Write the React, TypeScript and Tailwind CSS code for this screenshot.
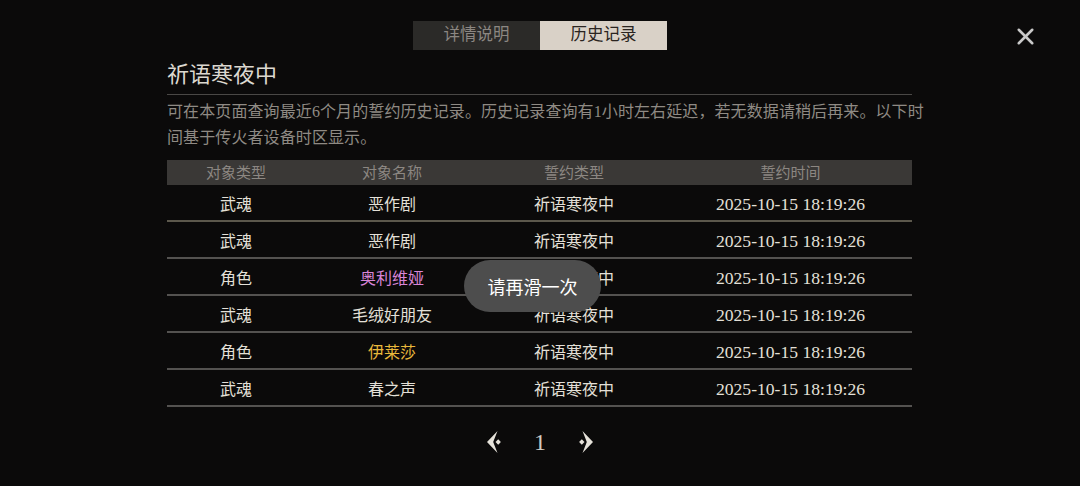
import { X } from 'lucide-react'

type Row = {
  kind: string
  name: string
  tone?: 'purple' | 'gold'
  vow: string
  time: string
}

const ROWS: Row[] = [
  { kind: '武魂', name: '恶作剧', vow: '祈语寒夜中', time: '2025-10-15 18:19:26' },
  { kind: '武魂', name: '恶作剧', vow: '祈语寒夜中', time: '2025-10-15 18:19:26' },
  { kind: '角色', name: '奥利维娅', tone: 'purple', vow: '祈语寒夜中', time: '2025-10-15 18:19:26' },
  { kind: '武魂', name: '毛绒好朋友', vow: '祈语寒夜中', time: '2025-10-15 18:19:26' },
  { kind: '角色', name: '伊莱莎', tone: 'gold', vow: '祈语寒夜中', time: '2025-10-15 18:19:26' },
  { kind: '武魂', name: '春之声', vow: '祈语寒夜中', time: '2025-10-15 18:19:26' },
]

const COLS = 'grid grid-cols-[138px_174px_190px_243px]'

const serif = { fontFamily: '"Liberation Serif", "Noto Sans CJK SC", serif' }

function nameColor(tone?: Row['tone']) {
  if (tone === 'purple') return 'text-[#d985d8]'
  if (tone === 'gold') return 'text-[#e9b83c]'
  return 'text-[#e4e0d8]'
}

// Dart-shaped page arrow with a small diamond sitting in its notch
function PageArrow({ dir }: { dir: 'left' | 'right' }) {
  return (
    <svg
      width="20"
      height="26"
      viewBox="0 0 20 26"
      className={dir === 'right' ? '-scale-x-100' : ''}
      fill="#e6e2da"
    >
      <path d="M12.5 2 L2 13 L12.5 24 L8.2 13 Z" />
      <path d="M13.2 10.3 L15.9 13 L13.2 15.7 L10.5 13 Z" />
    </svg>
  )
}

export default function App() {
  return (
    <div
      className="relative w-[1080px] h-[486px] bg-[#0b0a0a] overflow-hidden text-[#e4e0d8]"
      style={serif}
    >
      <button type="button" className="absolute right-[41px] top-[23px] text-[#c9c9c9]">
        <X size={27} strokeWidth={2.3} />
      </button>

      <div className="flex justify-center pt-[21px]">
        <div className="flex h-[29px]">
          <div className="w-[127px] flex items-center justify-center bg-[#2b2a28] text-[#8c8782] text-[16.5px]">
            详情说明
          </div>
          <div className="w-[127px] flex items-center justify-center bg-[#d9d1c7] text-[#2a2420] text-[16.5px]">
            历史记录
          </div>
        </div>
      </div>

      <div className="ml-[167px] w-[770px]">
        <h1 className="mt-[10px] text-[22px] leading-[30px] text-[#dcd8d0]">祈语寒夜中</h1>
        <div className="mt-[4px] w-[745px] h-px bg-[#4a4846]" />
        <p className="mt-[4px] text-[16px] leading-[26px] text-[#8f8a84] tracking-[0.1px]">
          可在本页面查询最近6个月的誓约历史记录。历史记录查询有1小时左右延迟，若无数据请稍后再来。以下时间基于传火者设备时区显示。
        </p>

        <div className="mt-[9px] w-[745px]">
          <div className={`${COLS} h-[25px] items-center bg-[#3a3836] text-[15px] text-[#8c8782] text-center pt-[1px]`}>
            <span>对象类型</span>
            <span>对象名称</span>
            <span>誓约类型</span>
            <span>誓约时间</span>
          </div>
          {ROWS.map((r, i) => (
            <div
              key={i}
              className={`${COLS} h-[37px] items-center text-center text-[16px] pt-[4px] border-b-2 ${
                i === 0 ? 'border-[#5c584c]' : 'border-[#545250]'
              }`}
            >
              <span>{r.kind}</span>
              <span className={nameColor(r.tone)}>{r.name}</span>
              <span>{r.vow}</span>
              <span className="text-[17.6px]">{r.time}</span>
            </div>
          ))}
        </div>

        <div className="mt-[22px] w-[745px] flex items-center justify-center gap-[29px] pl-[1px]">
          <PageArrow dir="left" />
          <span className="text-[24px] leading-none text-[#cfcbc3]">1</span>
          <PageArrow dir="right" />
        </div>
      </div>

      <div
        className="absolute left-[464px] top-[260px] w-[137px] h-[52px] rounded-full bg-[#4d4d4d] flex items-center justify-center text-[18px] text-white"
        style={{ fontFamily: '"Noto Sans CJK SC", sans-serif' }}
      >
        请再滑一次
      </div>
    </div>
  )
}
